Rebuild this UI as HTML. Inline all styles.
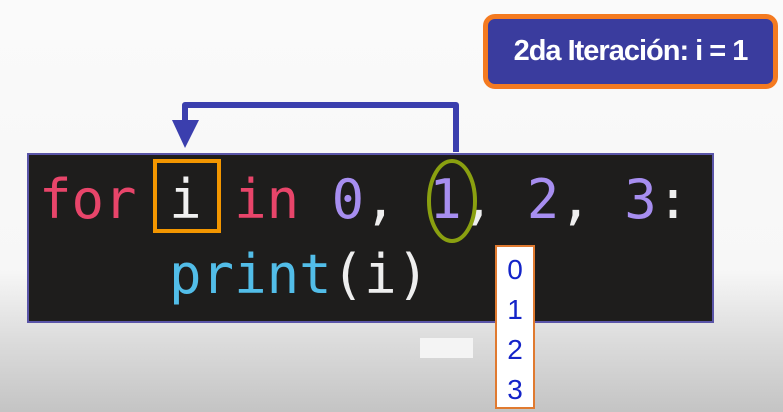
<!DOCTYPE html>
<html><head><style>
body{margin:0;width:783px;height:412px;overflow:hidden;position:relative;font-family:"Liberation Sans",sans-serif;
background:linear-gradient(to bottom,#fafafa 0,#f7f7f7 270px,#dcdcdc 340px,#c4c4c4 412px);}
.code{position:absolute;left:27px;top:153px;width:683px;height:166px;background:#1e1d1c;border:2px solid #5a55a8;}
.ln{position:absolute;font-family:"DejaVu Sans Mono",monospace;font-size:54px;line-height:60px;white-space:pre;}
.badge{position:absolute;left:483px;top:14px;width:285px;height:65px;border:5px solid #f47a20;border-radius:12px;background:#3a3c9e;color:#fff;font-weight:bold;font-size:29px;text-align:center;line-height:65px;letter-spacing:-1px;}
.out{position:absolute;left:495px;top:245px;width:36px;height:160px;background:#fff;border:2px solid #e07a30;color:#1424c8;font-size:28px;text-align:center;line-height:40px;padding-top:3px;box-sizing:content-box;height:157px;}
</style></head><body>
<div class="badge">2da Iteración: i = 1</div>
<div class="code"></div>
<div class="ln" style="left:39px;top:170px;"><span style="color:#e8456a">for</span> <span style="color:#f0f0f0">i</span> <span style="color:#e8456a">in</span> <span style="color:#a78ef0">0</span><span style="color:#eee">,</span> <span style="color:#a78ef0">1</span><span style="color:#eee">,</span> <span style="color:#a78ef0">2</span><span style="color:#eee">,</span> <span style="color:#a78ef0">3</span><span style="color:#eee">:</span></div>
<div class="ln" style="left:39px;top:245px;">    <span style="color:#52bde8">print</span><span style="color:#eee">(i)</span></div>
<div style="position:absolute;left:420px;top:338px;width:53px;height:20px;background:#f4f4f4"></div>
<svg style="position:absolute;left:0;top:0" width="783" height="412">
<rect x="155" y="161" width="64" height="70" fill="none" stroke="#f39600" stroke-width="4"/>
<ellipse cx="452" cy="201" rx="23" ry="40" fill="none" stroke="#8aa010" stroke-width="4"/>
<polyline points="456,152 456,105 185,105 185,125" fill="none" stroke="#3b3fae" stroke-width="6" stroke-linejoin="round"/>
<polygon points="172,120 199,120 185,148" fill="#3b3fae"/>
</svg>
<div class="out">0<br>1<br>2<br>3</div>
</body></html>
